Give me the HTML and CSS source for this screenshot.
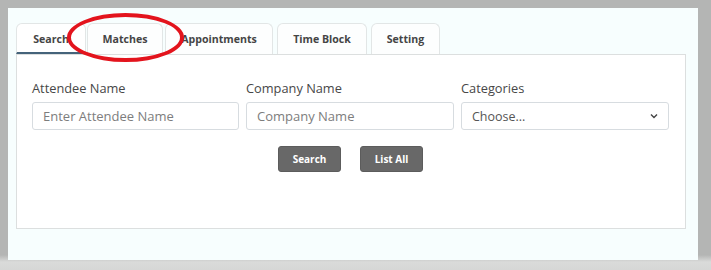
FILE: index.html
```html
<!DOCTYPE html>
<html lang="en">
<head>
    <meta charset="UTF-8">
    <title>Attendee Search</title>
    <link rel="stylesheet" href="styles.css">
</head>
<body>
    <div class="panel">
        <div class="tabs">
            <div class="tab active">Search</div>
            <div class="tab">Matches</div>
            <div class="tab">Appointments</div>
            <div class="tab">Time Block</div>
            <div class="tab">Setting</div>
        </div>
        <div class="tab-content">
            <div class="fields">
                <div class="field">
                    <label>Attendee Name</label>
                    <input type="text" placeholder="Enter Attendee Name">
                </div>
                <div class="field">
                    <label>Company Name</label>
                    <input type="text" placeholder="Company Name">
                </div>
                <div class="field">
                    <label>Categories</label>
                    <div class="select">
                        <span>Choose...</span>
                        <svg width="8" height="6" viewBox="0 0 8 6"><path d="M1 1.5 L4 4.5 L7 1.5" fill="none" stroke="#444" stroke-width="1.4"/></svg>
                    </div>
                </div>
            </div>
            <div class="actions">
                <button class="btn">Search</button>
                <button class="btn">List All</button>
            </div>
        </div>
        <div class="circle"></div>
    </div>
</body>
</html>
```

FILE: styles.css
```css
* {
    margin: 0;
    padding: 0;
    box-sizing: border-box;
}

body {
    font-family: 'Open Sans', 'Noto Sans', sans-serif;
    background: linear-gradient(180deg, #b4b5b4 0, #b4b5b4 255px, #dadbda 262px, #d6d7d6 270px);
    height: 270px;
    padding: 8px 13px 10px 8px;
    overflow: hidden;
}

.panel {
    position: relative;
    background: #f7fefe;
    width: 690px;
    height: 252px;
    padding: 15px 12px 0 8px;
}

.tabs {
    display: flex;
    height: 31px;
}

.tab {
    border: 1px solid #e2e6e6;
    border-bottom: none;
    border-radius: 6px 6px 0 0;
    background: #fdfefe;
    color: #454545;
    font-size: 10.6px;
    font-weight: 700;
    display: flex;
    align-items: center;
    justify-content: center;
}

.tab:nth-child(1) { width: 70px; margin-right: 1px; }
.tab:nth-child(2) { width: 76px; margin-right: 2px; }
.tab:nth-child(3) { width: 108px; margin-right: 4px; }
.tab:nth-child(4) { width: 90px; margin-right: 4px; }
.tab:nth-child(5) { width: 69px; }

.tab.active {
    background: #fff;
    border-bottom: 2px solid #44637a;
    padding-top: 2px;
}

.tab-content {
    background: #fff;
    border: 1px solid #dcdfdf;
    height: 175px;
    padding: 24px 16px 0 15px;
}

.fields {
    display: grid;
    grid-template-columns: 207px 208px 208px;
    gap: 7px;
}

.field label {
    display: block;
    font-size: 12.8px;
    color: #474747;
    height: 23px;
}

.field input,
.select {
    width: 100%;
    height: 28px;
    border: 1px solid #d7dce0;
    border-radius: 3px;
    padding: 0 10px;
    font-family: inherit;
    font-size: 13px;
    color: #555;
    background: #fff;
}

.field input::placeholder {
    color: #7d7d7d;
}

.select {
    display: flex;
    align-items: center;
    justify-content: space-between;
    font-size: 12.5px;
    color: #555;
}

.actions {
    display: flex;
    justify-content: center;
    gap: 19px;
    margin-top: 16px;
}

.btn {
    font-family: inherit;
    background: #686868;
    color: #fff;
    border: 1px solid #5c5c5c;
    border-radius: 3px;
    font-size: 10px;
    font-weight: 700;
    width: 63px;
    height: 26px;
}

.circle {
    position: absolute;
    left: 59px;
    top: 5px;
    width: 117px;
    height: 49px;
    border: 4px solid #e3141d;
    border-radius: 50%;
}
```
